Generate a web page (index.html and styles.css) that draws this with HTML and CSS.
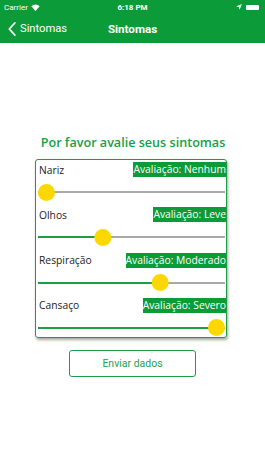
FILE: index.html
```html
<!DOCTYPE html>
<html lang="pt">
<head>
<meta charset="utf-8">
<link rel="stylesheet" href="styles.css">
</head>
<body>
<header class="topbar">
  <div class="status">
    <div class="status-left">
      <span>Carrier</span>
      <svg class="wifi" width="9" height="7" viewBox="0 0 9 7"><path d="M4.5 7 L0.3 2.3 A6 6 0 0 1 8.7 2.3 Z" fill="#fff"/></svg>
    </div>
    <div class="status-time">6:18 PM</div>
    <div class="status-right">
      <svg width="6" height="6" viewBox="0 0 6 6"><path d="M6 0 L0 2.6 L2.9 3.1 L3.4 6 Z" fill="#fff"/></svg>
      <div class="battery"></div>
    </div>
  </div>
  <nav class="navbar">
    <div class="back">
      <svg width="8" height="14" viewBox="0 0 8 14"><path d="M6.8 1 L1.3 7 L6.8 13" fill="none" stroke="#fff" stroke-width="1.8" stroke-linecap="round" stroke-linejoin="round"/></svg>
      <span>Sintomas</span>
    </div>
    <div class="nav-title">Sintomas</div>
  </nav>
</header>
<main class="content">
  <h1 class="title">Por favor avalie seus sintomas</h1>
  <section class="card">
    <div class="row">
      <div class="row-head"><span class="name">Nariz</span><span class="badge">Avaliação: Nenhum</span></div>
      <div class="slider"><div class="track"><div class="fill" style="width:0%"></div></div><div class="thumb" style="left:0%"></div></div>
    </div>
    <div class="row">
      <div class="row-head"><span class="name">Olhos</span><span class="badge">Avaliação: Leve</span></div>
      <div class="slider"><div class="track"><div class="fill" style="width:33.33%"></div></div><div class="thumb" style="left:33.33%"></div></div>
    </div>
    <div class="row">
      <div class="row-head"><span class="name">Respiração</span><span class="badge">Avaliação: Moderado</span></div>
      <div class="slider"><div class="track"><div class="fill" style="width:66.67%"></div></div><div class="thumb" style="left:66.67%"></div></div>
    </div>
    <div class="row">
      <div class="row-head"><span class="name">Cansaço</span><span class="badge">Avaliação: Severo</span></div>
      <div class="slider"><div class="track"><div class="fill" style="width:100%"></div></div><div class="thumb" style="left:100%"></div></div>
    </div>
  </section>
  <div class="actions">
    <button class="send">Enviar dados</button>
  </div>
</main>
</body>
</html>
```
FILE: styles.css
```css
html, body {
  margin: 0;
  padding: 0;
  background: #fff;
}
body {
  width: 265px;
  height: 471px;
  overflow: hidden;
  font-family: "Open Sans", "Noto Sans", sans-serif;
}
.topbar {
  background: #0b9b38;
  color: #fff;
  height: 43px;
  font-family: Roboto, "Liberation Sans", sans-serif;
}
.status {
  height: 14px;
  display: flex;
  align-items: center;
  justify-content: space-between;
  padding: 0 6px 0 4px;
  font-size: 8px;
  position: relative;
}
.status-left {
  display: flex;
  align-items: center;
  gap: 3px;
}
.status-time {
  position: absolute;
  left: 0;
  right: 0;
  text-align: center;
  font-weight: 700;
}
.status-right {
  display: flex;
  align-items: center;
  gap: 4px;
}
.battery {
  width: 13px;
  height: 5px;
  border-radius: 1px;
  background: #fff;
}
.navbar {
  height: 29px;
  display: flex;
  align-items: center;
  position: relative;
  padding-left: 8px;
}
.back {
  display: flex;
  align-items: center;
  gap: 4px;
  font-size: 11.2px;
}
.nav-title {
  position: absolute;
  left: 0;
  right: 0;
  text-align: center;
  font-size: 11.6px;
  font-weight: 700;
  pointer-events: none;
}
.content {
  padding-top: 92px;
}
.title {
  margin: 0;
  text-align: center;
  color: #17a046;
  font-size: 12.6px;
  line-height: 16px;
  font-weight: 600;
  padding-left: 1px;
}
.card {
  margin: 8px 0 0 35px;
  width: 192px;
  box-sizing: border-box;
  border: 1px solid #1a9d45;
  border-radius: 3px;
  padding: 2px 0 0 2px;
  box-shadow: 1px 2px 3px rgba(0,0,0,0.35);
  display: flex;
  flex-direction: column;
  gap: 6.33px;
}
.row-head {
  height: 15px;
  display: flex;
  justify-content: space-between;
  align-items: center;
  font-size: 10.3px;
}
.name {
  color: #222;
  padding-left: 1px;
}
.badge {
  background: #0b9b38;
  color: #fff;
  height: 15px;
  line-height: 15px;
  white-space: nowrap;
}
.slider {
  height: 24px;
  position: relative;
  margin-right: 1px;
}
.track {
  position: absolute;
  left: 0;
  right: 0;
  top: 14px;
  height: 2px;
  background: #a9a9a9;
}
.fill {
  height: 100%;
  background: #1e9e44;
}
.thumb {
  position: absolute;
  top: 6.5px;
  width: 17px;
  height: 17px;
  border-radius: 50%;
  background: #fdd700;
}
.slider .thumb[style*="left:0%"] { transform: none; }
.slider .thumb[style*="33.33%"] { transform: translateX(-33.33%); }
.slider .thumb[style*="66.67%"] { transform: translateX(-66.67%); }
.slider .thumb[style*="100%"] { transform: translateX(-100%); }
.actions {
  margin-top: 12px;
  display: flex;
  padding-left: 69px;
}
.send {
  width: 127px;
  height: 27px;
  background: #fff;
  border: 1px solid #1a9d45;
  border-radius: 3px;
  color: #27a050;
  font-family: Roboto, "Liberation Sans", sans-serif;
  font-size: 10.5px;
  padding: 0;
}
```
